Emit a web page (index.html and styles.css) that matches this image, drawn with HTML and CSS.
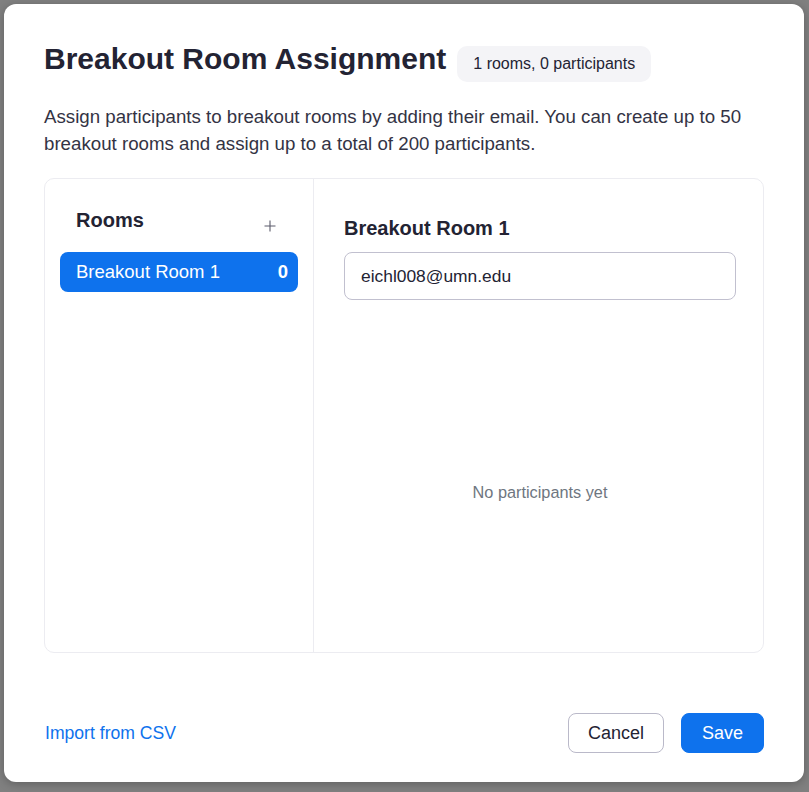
FILE: index.html
```html
<!DOCTYPE html>
<html lang="en">
<head>
<meta charset="utf-8">
<title>Breakout Room Assignment</title>
<link rel="stylesheet" href="styles.css">
</head>
<body>
  <div class="modal" role="dialog" aria-labelledby="dlg-title">
    <div class="modal-header">
      <h1 class="modal-title" id="dlg-title">Breakout Room Assignment</h1>
      <span class="badge">1 rooms, 0 participants</span>
    </div>
    <p class="modal-desc">Assign participants to breakout rooms by adding their email. You can create up to 50 breakout rooms and assign up to a total of 200 participants.</p>

    <div class="panel">
      <aside class="rooms">
        <div class="rooms-head">
          <h2 class="rooms-title">Rooms</h2>
          <button class="add-btn" aria-label="Add room">
            <svg width="12" height="12" viewBox="0 0 12 12"><path d="M6 0.5v11M0.5 6h11" stroke="#5b5b6b" stroke-width="1.1" fill="none"/></svg>
          </button>
        </div>
        <div class="room-item">
          <span class="room-name">Breakout Room 1</span>
          <span class="room-count">0</span>
        </div>
      </aside>
      <section class="room-detail">
        <h2 class="detail-title">Breakout Room 1</h2>
        <input class="email-input" type="text" value="eichl008@umn.edu">
        <div class="empty">No participants yet</div>
      </section>
    </div>

    <div class="modal-footer">
      <a class="import-link" href="#">Import from CSV</a>
      <div class="actions">
        <button class="btn btn-secondary">Cancel</button>
        <button class="btn btn-primary">Save</button>
      </div>
    </div>
  </div>
</body>
</html>
```

FILE: styles.css
```css
* { box-sizing: border-box; }

html, body {
  margin: 0;
  height: 100%;
}

body {
  background: #808080;
  font-family: "Liberation Sans", Arial, sans-serif;
  color: #232333;
  display: flex;
  justify-content: flex-start;
  align-items: flex-start;
  padding: 4px 0 0 4px;
}

.modal {
  width: 800px;
  height: 778px;
  background: #ffffff;
  border-radius: 12px;
  box-shadow: 0 2px 10px rgba(0, 0, 0, 0.25);
  padding: 37px 40px 29px 40px;
  display: flex;
  flex-direction: column;
}

.modal-header {
  display: flex;
  align-items: baseline;
  gap: 11px;
}

.modal-title {
  margin: 0;
  font-size: 30px;
  line-height: 36px;
  font-weight: 700;
  color: #232333;
}

.badge {
  background: #f4f4f7;
  border-radius: 10px;
  padding: 8px 16px;
  font-size: 16px;
  line-height: 20px;
  color: #232333;
}

.modal-desc {
  margin: 21px 0 0 0;
  font-size: 18.7px;
  line-height: 27px;
  color: #333344;
}

.panel {
  margin-top: 21px;
  height: 475px;
  border: 1px solid #ececf1;
  border-radius: 10px;
  display: flex;
}

.rooms {
  width: 269px;
  border-right: 1px solid #ececf1;
  padding: 29px 15px 0 15px;
}

.rooms-head {
  display: flex;
  justify-content: space-between;
  align-items: flex-start;
  padding: 0 16px 0 16px;
}

.rooms-title {
  margin: 0;
  font-size: 20px;
  line-height: 24px;
  font-weight: 700;
  color: #232333;
}

.add-btn {
  margin-top: 6px;
  width: 24px;
  height: 24px;
  border: 0;
  background: transparent;
  padding: 0;
  display: flex;
  align-items: center;
  justify-content: center;
  cursor: pointer;
}

.room-item {
  margin-top: 14px;
  height: 40px;
  background: #0e72ed;
  border-radius: 8px;
  color: #ffffff;
  display: flex;
  align-items: center;
  justify-content: space-between;
  padding: 0 10px 0 16px;
  font-size: 18.5px;
}

.room-count {
  font-weight: 700;
}

.room-detail {
  flex: 1;
  padding: 37px 27px 0 30px;
  display: flex;
  flex-direction: column;
}

.detail-title {
  margin: 0;
  font-size: 20px;
  line-height: 24px;
  font-weight: 700;
  color: #232333;
}

.email-input {
  margin-top: 12px;
  height: 48px;
  width: 100%;
  border: 1px solid #c1c0cf;
  border-radius: 8px;
  padding: 0 16px;
  font-family: inherit;
  font-size: 17.4px;
  color: #232333;
  background: #ffffff;
  outline: none;
}

.empty {
  flex: 1;
  margin-top: 32px;
  display: flex;
  align-items: center;
  justify-content: center;
  font-size: 16.3px;
  color: #6e7680;
}

.modal-footer {
  margin-top: 60px;
  display: flex;
  align-items: center;
  justify-content: space-between;
}

.import-link {
  font-size: 17.6px;
  color: #0e72ed;
  text-decoration: none;
  margin-left: 1px;
}

.actions {
  display: flex;
  gap: 17px;
}

.btn {
  height: 40px;
  padding: 0 20px;
  border-radius: 8px;
  font-family: inherit;
  font-size: 18px;
  cursor: pointer;
}

.btn-secondary {
  background: #ffffff;
  border: 1px solid #bab9c9;
  color: #232333;
  padding: 0 19px;
}

.btn-primary {
  background: #0e72ed;
  border: 1px solid #0e72ed;
  color: #ffffff;
}
```
